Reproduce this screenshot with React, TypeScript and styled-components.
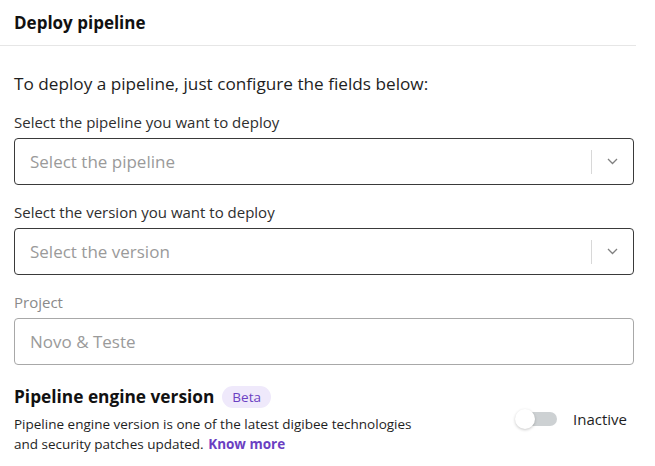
import React from 'react';
import styled, { createGlobalStyle } from 'styled-components';

const GlobalStyle = createGlobalStyle`
  body {
    margin: 0;
    background: #ffffff;
    font-family: 'Open Sans', 'Noto Sans', sans-serif;
    font-stretch: 88%;
    color: #222;
  }
`;

const Page = styled.div`
  width: 636px;
`;

const Header = styled.div`
  height: 46px;
  box-sizing: border-box;
  padding: 0 14px;
  display: flex;
  align-items: center;
  border-bottom: 1px solid #e6e6e6;
  font-size: 17px;
  font-weight: 700;
  color: #111;
`;

const Body = styled.div`
  padding: 26px 2px 0 14px;
  display: flex;
  flex-direction: column;
`;

const Intro = styled.p`
  margin: 0 0 16px;
  font-size: 17.2px;
  line-height: 24px;
  color: #1e1e1e;
`;

const Field = styled.div`
  display: flex;
  flex-direction: column;
  gap: 6px;
  margin-bottom: 17px;
`;

const Label = styled.label<{ $muted?: boolean }>`
  font-size: 15px;
  line-height: 20px;
  color: ${(p) => (p.$muted ? '#8a8a8a' : '#2e2e2e')};
`;

const Box = styled.div<{ $muted?: boolean }>`
  height: 47px;
  box-sizing: border-box;
  border: 1px solid ${(p) => (p.$muted ? '#a8a8a8' : '#3a3a3a')};
  border-radius: 4px;
  display: flex;
  align-items: center;
  padding-left: 15px;
`;

const Placeholder = styled.span`
  flex: 1;
  font-size: 17px;
  color: #9a9a9a;
`;

const Indicator = styled.div`
  height: 24px;
  display: flex;
  align-items: center;
  border-left: 1px solid #d8d8d8;
  padding: 0 15px 0 15px;
  color: #777;
`;

const Engine = styled.div`
  display: flex;
  align-items: flex-end;
  justify-content: space-between;
  margin-top: 3px;
`;

const EngineText = styled.div`
  display: flex;
  flex-direction: column;
`;

const TitleRow = styled.div`
  display: flex;
  align-items: center;
  gap: 8px;
  margin-bottom: 6px;
`;

const EngineTitle = styled.h3`
  margin: 0;
  font-size: 17.3px;
  font-weight: 700;
  color: #111;
`;

const Badge = styled.span`
  font-size: 13.5px;
  line-height: 22px;
  padding: 0 10px;
  border-radius: 11px;
  background: #efe9fb;
  color: #6b3fc2;
`;

const Description = styled.p`
  margin: 0;
  font-size: 13.5px;
  line-height: 20px;
  color: #1e1e1e;
`;

const Link = styled.a`
  font-weight: 700;
  color: #6b3fc2;
  text-decoration: none;
  margin-left: 1px;
`;

const ToggleWrap = styled.div`
  display: flex;
  align-items: center;
  gap: 16px;
  margin-right: 7px;
  margin-bottom: 25px;
`;

const Track = styled.div`
  position: relative;
  width: 37px;
  height: 14px;
  border-radius: 7px;
  background: #cdd1d3;
  margin-left: 5px;
`;

const Knob = styled.div`
  position: absolute;
  left: -5px;
  top: -3px;
  width: 20px;
  height: 20px;
  border-radius: 50%;
  background: #fff;
  box-shadow: 0 1px 3px rgba(0, 0, 0, 0.22);
`;

const ToggleLabel = styled.span`
  font-size: 15px;
  color: #1e1e1e;
`;

const Chevron = () => (
  <svg width="11" height="7" viewBox="0 0 11 7" fill="none">
    <path d="M1 1 L5.5 5.5 L10 1" stroke="#808080" strokeWidth="1.3" />
  </svg>
);

const Select: React.FC<{ placeholder: string }> = ({ placeholder }) => (
  <Box>
    <Placeholder>{placeholder}</Placeholder>
    <Indicator>
      <Chevron />
    </Indicator>
  </Box>
);

export default function App() {
  return (
    <Page>
      <GlobalStyle />
      <Header>Deploy pipeline</Header>
      <Body>
        <Intro>To deploy a pipeline, just configure the fields below:</Intro>
        <Field>
          <Label>Select the pipeline you want to deploy</Label>
          <Select placeholder="Select the pipeline" />
        </Field>
        <Field>
          <Label>Select the version you want to deploy</Label>
          <Select placeholder="Select the version" />
        </Field>
        <Field>
          <Label $muted>Project</Label>
          <Box $muted>
            <Placeholder>Novo &amp; Teste</Placeholder>
          </Box>
        </Field>
        <Engine>
          <EngineText>
            <TitleRow>
              <EngineTitle>Pipeline engine version</EngineTitle>
              <Badge>Beta</Badge>
            </TitleRow>
            <Description>
              Pipeline engine version is one of the latest digibee technologies
              <br />
              and security patches updated. <Link>Know more</Link>
            </Description>
          </EngineText>
          <ToggleWrap>
            <Track>
              <Knob />
            </Track>
            <ToggleLabel>Inactive</ToggleLabel>
          </ToggleWrap>
        </Engine>
      </Body>
    </Page>
  );
}
